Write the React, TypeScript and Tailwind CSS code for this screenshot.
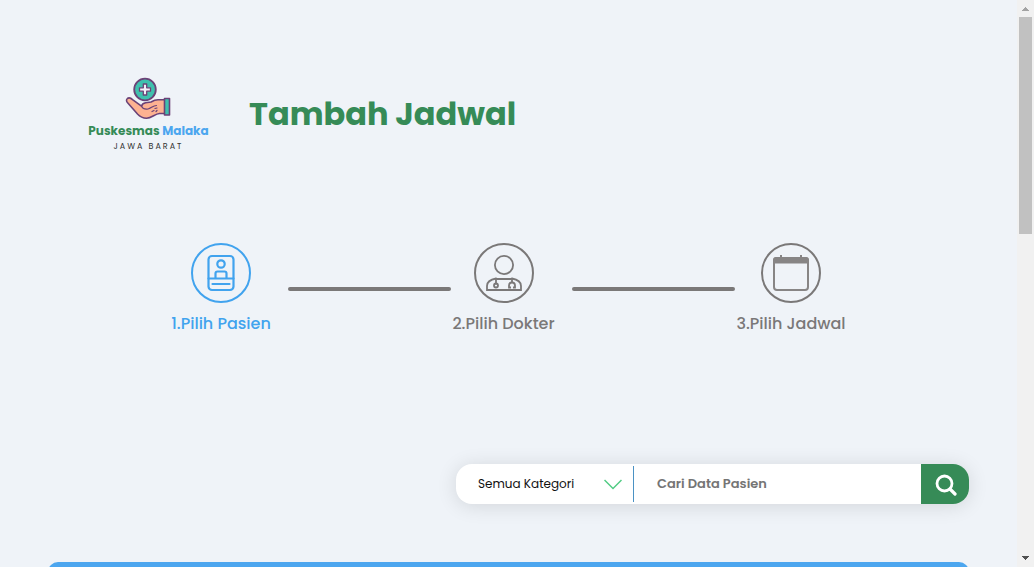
import React from "react";

type StepProps = { label: string; active?: boolean; width: string; children: React.ReactNode };

function Step({ label, active, width, children }: StepProps) {
  return (
    <li className={`flex shrink-0 flex-col items-center ${width} ${active ? "text-[#41a3ee]" : "text-[#7a7878]"}`}>
      <span className="flex size-[60px] items-center justify-center rounded-full border-2 border-current">
        {children}
      </span>
      <span className="mt-[9px] text-base leading-6 font-medium whitespace-nowrap">{label}</span>
    </li>
  );
}

function Connector() {
  return <li aria-hidden="true" className="mt-11 ml-4 h-1 w-[163px] rounded-xs bg-[#7a7878]" />;
}

function LogoMark() {
  return (
    <svg width="48" height="42" viewBox="0 0 48 42" fill="none" aria-hidden="true" strokeLinejoin="round" strokeLinecap="round">
      <circle cx="20" cy="12.5" r="10.8" fill="#3fc0ae" stroke="#6b4277" strokeWidth="1.8" />
      <path d="M18.3 7h3.400v3.800h3.800v3.400h-3.800V18h-3.400v-3.800h-3.800v-3.400h3.800z" fill="#f4f0f8" stroke="#6b4277" strokeWidth="1.3" />
      <path
        d="M2.4 21.5c1.700-1.300 3.800-.2 5.500 1.300l8.600 6.400c.5-2 2-3 4.200-3.400l5.300-.8c2.200-1.300 4.600-2.300 7-2.300h7v13.800h-5.500c-4.500.2-7.800 4.700-13 4.700-3.500 0-6.500-1.500-9-4.200L2.600 25.800c-1.300-1.400-1.500-3.200-.2-4.300z"
        fill="#fdb291"
        stroke="#6b4277"
        strokeWidth="1.6"
      />
      <path d="M16.500 29.200c1.500 3 4 3.300 6.500 2.800 3-.6 5-3.500 8.500-3.500M27 34.500l2-1M31 34.500l1-1M30 31.500l2-.5" stroke="#6b4277" strokeWidth="1.2" />
      <path d="M39.500 21.500h5v16.500h-5z" fill="#3fc0ae" stroke="#6b4277" strokeWidth="1.6" />
    </svg>
  );
}

function PatientIcon() {
  return (
    <svg width="28" height="38" viewBox="0 0 28 38" fill="none" stroke="currentColor" strokeWidth="2.2" aria-hidden="true">
      <rect x="1.500" y="2" width="25" height="34" rx="3.500" />
      <circle cx="14" cy="10" r="3.700" />
      <path d="M1.500 24.500h25M8.500 24v-4.500a2 2 0 0 1 2-2h7a2 2 0 0 1 2 2V24M5.500 30h17" strokeLinecap="round" />
    </svg>
  );
}

function DoctorIcon() {
  return (
    <svg width="38" height="38" viewBox="0 0 38 38" fill="none" stroke="currentColor" strokeWidth="1.8" aria-hidden="true">
      <circle cx="19" cy="11" r="9.100" />
      <path d="M11 24.500C5.500 25.500 2 28 2 32v4h34v-4c0-4-3.500-6.500-9-7.500L25.500 25h-13z" />
      <path d="M11 24.500v6M27 24.500v4" />
      <circle cx="11" cy="31.500" r="2" />
      <path d="M26 33.500h-2V31.500a3 3 0 0 1 6 0v2h-2" />
    </svg>
  );
}

function CalendarIcon() {
  return (
    <svg width="38" height="38" viewBox="0 0 38 38" fill="none" aria-hidden="true" className="text-[#878585]">
      <rect x="2" y="4" width="34" height="32" rx="3" stroke="currentColor" strokeWidth="2" />
      <path d="M1 9V6a3 3 0 0 1 3-3h30a3 3 0 0 1 3 3v3.500H1zM8 1h2v3H8zM28 1h2v3h-2z" fill="currentColor" />
    </svg>
  );
}

function ScrollRail() {
  return (
    <div aria-hidden="true" className="flex w-[17px] shrink-0 flex-col items-center bg-[#f1f1f1]">
      <svg width="17" height="17" viewBox="0 0 17 17" shapeRendering="crispEdges">
        <path d="M5 11h7L8.500 7z" fill="#a3a3a3" />
      </svg>
      <div className="h-[217px] w-[13px] bg-[#c1c1c1]" />
      <svg className="mt-auto" width="17" height="17" viewBox="0 0 17 17" shapeRendering="crispEdges">
        <path d="M5 6h7l-3.500 4z" fill="#505050" />
      </svg>
    </div>
  );
}

export default function App() {
  return (
    <div className="flex h-screen overflow-hidden bg-[#eff3f8] font-[Poppins,Inter,sans-serif]">
      <main className="min-w-0 flex-1 overflow-hidden px-12">
        <header className="flex items-center gap-10 pt-[77px] pl-10">
          <a href="#" className="flex w-[121px] flex-col items-center whitespace-nowrap">
            <LogoMark />
            <span className="mt-1 text-[12px] leading-4 font-bold text-[#368b57]">
              Puskesmas <span className="text-[#4ca6ef]">Malaka</span>
            </span>
            <span className="text-[8px] leading-4 tracking-[2px] text-[#333333]">JAWA BARAT</span>
          </a>
          <h1 className="-mt-1 text-[32px] leading-12 font-bold whitespace-nowrap text-[#368b57]">Tambah Jadwal</h1>
        </header>

        <ol className="mt-[88px] flex justify-center">
          <Step label="1.Pilih Pasien" active width="w-[102px]">
            <PatientIcon />
          </Step>
          <Connector />
          <Step label="2.Pilih Dokter" width="w-[105px]">
            <DoctorIcon />
          </Step>
          <Connector />
          <Step label="3.Pilih Jadwal" width="w-[112px]">
            <CalendarIcon />
          </Step>
        </ol>

        <form
          onSubmit={(event) => event.preventDefault()}
          className="mt-32 ml-auto flex h-10 w-full max-w-[513px] items-center overflow-hidden rounded-2xl bg-white shadow-[0_2px_20px_rgba(0,0,0,0.12)]"
        >
          <div className="relative h-9 w-[178px] shrink-0 border-r border-[#4b92c4]">
            <select
              aria-label="Kategori"
              className="h-full w-full appearance-none bg-transparent pl-[22px] text-[12px] text-[#111111] outline-none"
            >
              <option>Semua Kategori</option>
            </select>
            <svg
              className="pointer-events-none absolute top-3 right-[11px]"
              width="18"
              height="12"
              viewBox="0 0 18 12"
              fill="none"
              stroke="#52cc85"
              strokeWidth="1.5"
              aria-hidden="true"
            >
              <path d="M.5 2 9 10.500 17.500 2" />
            </svg>
          </div>
          <input
            type="search"
            aria-label="Cari Data Pasien"
            placeholder="Cari Data Pasien"
            className="h-full min-w-0 flex-1 bg-transparent px-[23px] text-[13px] font-semibold text-[#333333] outline-none placeholder:text-[#757575]"
          />
          <button type="submit" aria-label="Cari" className="flex h-full w-12 shrink-0 items-center justify-center bg-[#368b57] pt-px pl-0.5 text-white">
            <svg width="22" height="22" viewBox="0 0 22 22" fill="none" stroke="currentColor" aria-hidden="true">
              <circle cx="9.500" cy="9.500" r="7.500" strokeWidth="2.800" />
              <path d="m15 15 5 5" strokeWidth="3.200" strokeLinecap="round" />
            </svg>
          </button>
        </form>

        <section aria-label="Data pasien" className="mt-[58px] h-12 rounded-t-[10px] bg-[#4ca6ef]" />
      </main>
      <ScrollRail />
    </div>
  );
}
